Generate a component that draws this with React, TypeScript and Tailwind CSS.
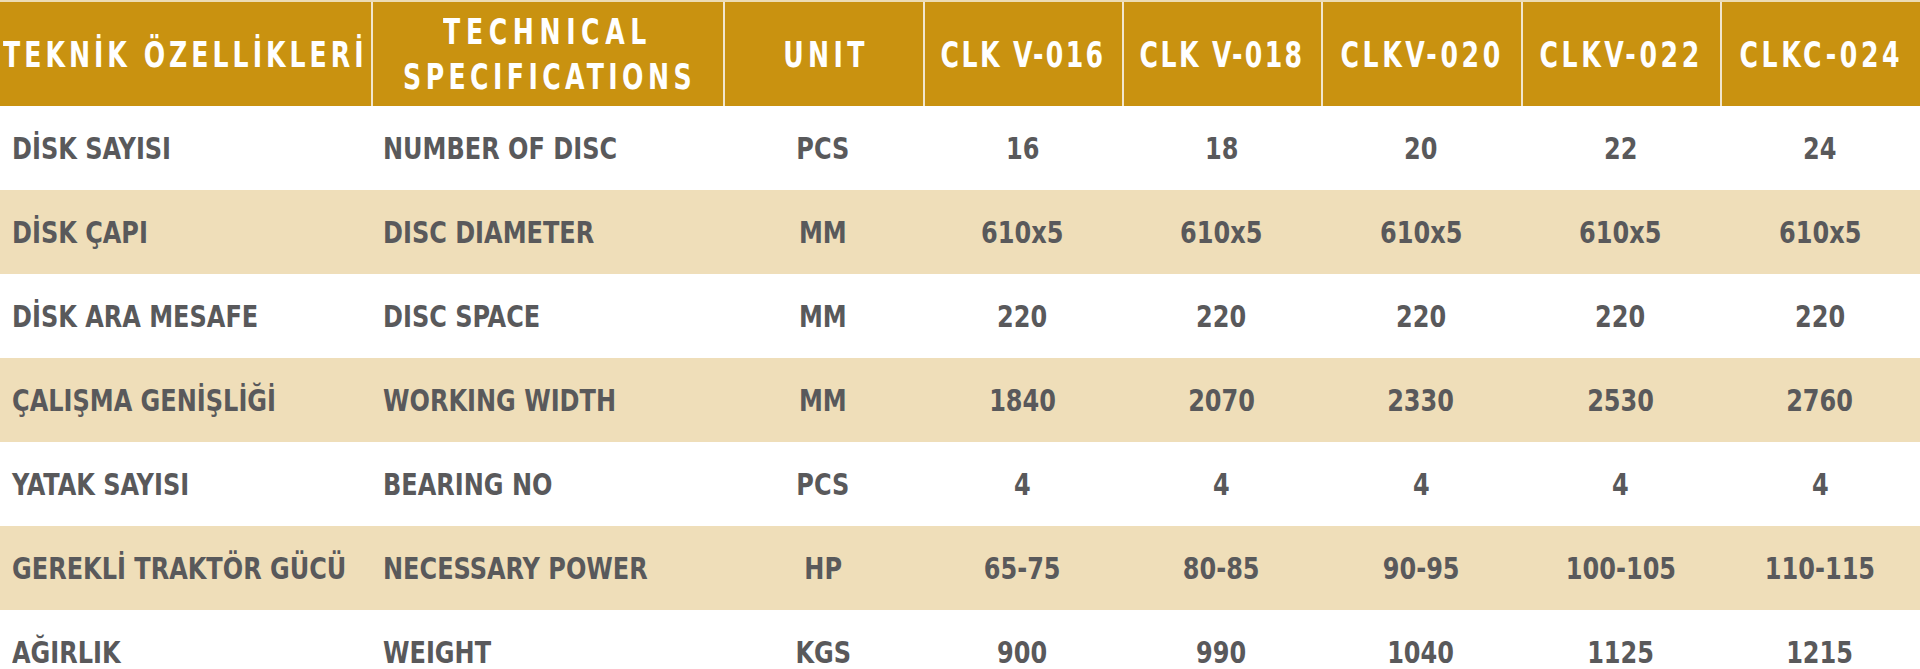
const MODELS: [string, string][] = [
  ["CLK V-016", "tracking-[3px]"],
  ["CLK V-018", "tracking-[3px]"],
  ["CLKV-020", "tracking-[4.5px]"],
  ["CLKV-022", "tracking-[4.5px]"],
  ["CLKC-024", "tracking-[4.5px]"],
];

type Row = {
  tr: string;
  en: string;
  unit: string;
  values: string[];
};

const ROWS: Row[] = [
  { tr: "DİSK SAYISI", en: "NUMBER OF DISC", unit: "PCS", values: ["16", "18", "20", "22", "24"] },
  { tr: "DİSK ÇAPI", en: "DISC DIAMETER", unit: "MM", values: ["610x5", "610x5", "610x5", "610x5", "610x5"] },
  { tr: "DİSK ARA MESAFE", en: "DISC SPACE", unit: "MM", values: ["220", "220", "220", "220", "220"] },
  { tr: "ÇALIŞMA GENİŞLİĞİ", en: "WORKING WIDTH", unit: "MM", values: ["1840", "2070", "2330", "2530", "2760"] },
  { tr: "YATAK SAYISI", en: "BEARING NO", unit: "PCS", values: ["4", "4", "4", "4", "4"] },
  { tr: "GEREKLİ TRAKTÖR GÜCÜ", en: "NECESSARY POWER", unit: "HP", values: ["65-75", "80-85", "90-95", "100-105", "110-115"] },
  { tr: "AĞIRLIK", en: "WEIGHT", unit: "KGS", values: ["900", "990", "1040", "1125", "1215"] },
];

const COLS = "grid grid-cols-[371px_352px_200px_199px_199px_200px_199px_200px]";

// the condensed DIN look is faked by squeezing DejaVu Sans Condensed
const HEAD = "inline-block whitespace-nowrap scale-x-[0.8]";
const BODY = "inline-block whitespace-nowrap scale-x-[0.89]";

export default function App() {
  return (
    <div className="w-[1920px] h-[669px] overflow-hidden bg-white font-['DejaVu_Sans_Condensed','DejaVu_Sans',sans-serif]">
      {/* header */}
      <div className={`${COLS} h-[106px] border-t-2 border-[#ecdcb4] bg-[#c99210] text-white font-bold text-[35px] leading-[45px]`}>
        <div className="flex items-center pl-[3px] pt-[2px]">
          <span className={`${HEAD} origin-left tracking-[5px]`}>TEKNİK ÖZELLİKLERİ</span>
        </div>
        <div className="flex flex-col items-center justify-center border-l-2 border-[#f2e6cc] text-center pt-[2px]">
          <span className={`${HEAD} tracking-[7px]`}>TECHNICAL</span>
          <span className={`${HEAD} tracking-[5.5px] pl-[5px]`}>SPECIFICATIONS</span>
        </div>
        <div className="flex items-center justify-center border-l-2 border-[#f2e6cc] pt-[2px]">
          <span className={`${HEAD} tracking-[5.5px] pl-[5px]`}>UNIT</span>
        </div>
        {MODELS.map(([m, track]) => (
          <div key={m} className="flex items-center justify-center border-l-2 border-[#f2e6cc] pt-[2px]">
            <span className={`${HEAD} ${track}`}>{m}</span>
          </div>
        ))}
      </div>

      {/* body */}
      {ROWS.map((row, i) => (
        <div
          key={row.tr}
          className={`${COLS} h-[84px] items-center text-[30px] font-bold text-[#59595b] ${
            i % 2 === 1 ? "bg-[#efdeb9]" : "bg-white"
          }`}
        >
          <div className="pl-[12px]">
            <span className={`${BODY} origin-left`}>{row.tr}</span>
          </div>
          <div className="pl-[12px]">
            <span className={`${BODY} origin-left`}>{row.en}</span>
          </div>
          <div className="text-center">
            <span className={BODY}>{row.unit}</span>
          </div>
          {row.values.map((v, j) => (
            <div key={j} className="text-center">
              <span className={BODY}>{v}</span>
            </div>
          ))}
        </div>
      ))}
    </div>
  );
}
